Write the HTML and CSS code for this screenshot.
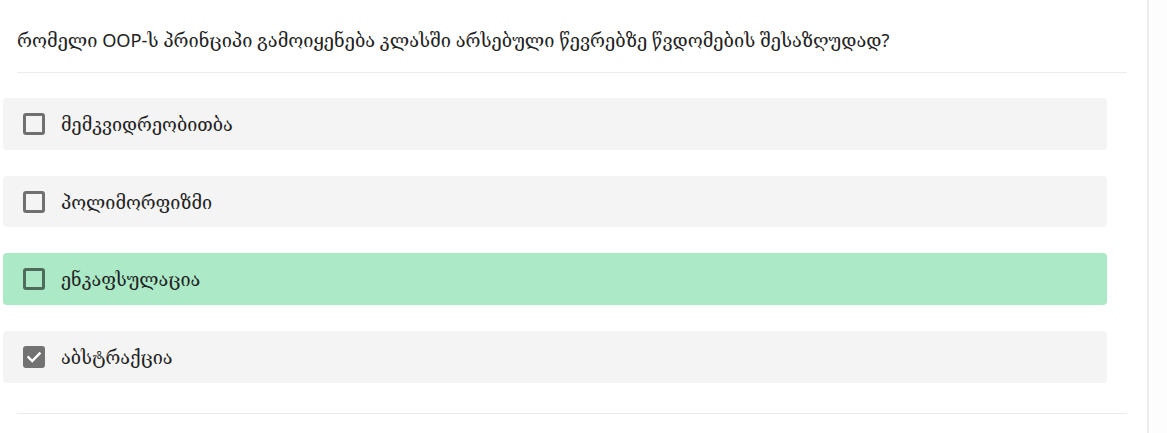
FILE: index.html
```html
<!DOCTYPE html>
<html lang="ka">
<head>
<meta charset="utf-8">
<title>Quiz</title>
<link rel="stylesheet" href="styles.css">
</head>
<body>
<div class="page">
  <div class="question">რომელი OOP-ს პრინციპი გამოიყენება კლასში არსებული წევრებზე წვდომების შესაზღუდად?</div>
  <div class="options">
    <div class="option">
      <span class="box"></span>
      <span class="label">მემკვიდრეობითბა</span>
    </div>
    <div class="option">
      <span class="box"></span>
      <span class="label">პოლიმორფიზმი</span>
    </div>
    <div class="option correct">
      <span class="box"></span>
      <span class="label">ენკაფსულაცია</span>
    </div>
    <div class="option">
      <span class="box checked">
        <svg viewBox="0 0 22 22" width="22" height="22"><path d="M5.5 11.3l3.7 3.7 7.4-7.6" fill="none" stroke="#fff" stroke-width="2.4" stroke-linecap="square"/></svg>
      </span>
      <span class="label">აბსტრაქცია</span>
    </div>
  </div>
  <div class="footer-line"></div>
</div>
</body>
</html>
```
FILE: styles.css
```css
html, body {
  margin: 0;
  padding: 0;
  background: #fdfdfd;
}
body {
  font-family: "Noto Sans", "DejaVu Serif", serif;
  color: #222;
}
.page {
  width: 1149px;
  min-height: 433px;
  background: #fff;
  border-right: 2px solid #ececec;
  box-sizing: border-box;
}
.question {
  margin: 0 20px 0 17px;
  padding: 28px 0 20px;
  font-size: 18.2px;
  line-height: 24px;
  border-bottom: 1px solid #ebebeb;
}
.options {
  display: flex;
  flex-direction: column;
  gap: 26px;
  padding: 25px 40px 0 3px;
}
.option {
  display: flex;
  align-items: center;
  gap: 16px;
  height: 51.7px;
  padding-left: 20px;
  background: #f4f4f4;
  border-radius: 4px;
  font-size: 18px;
}
.option.correct {
  background: #abe9c7;
}
.box {
  width: 22px;
  height: 22px;
  box-sizing: border-box;
  border: 3px solid rgba(0, 0, 0, 0.54);
  border-radius: 3px;
  flex: none;
  position: relative;
}
.box.checked {
  background: #727272;
  border-color: #727272;
}
.box.checked svg {
  position: absolute;
  left: -3px;
  top: -3px;
}
.footer-line {
  margin: 30px 20px 0 17px;
  border-top: 1px solid #ebebeb;
}
```
